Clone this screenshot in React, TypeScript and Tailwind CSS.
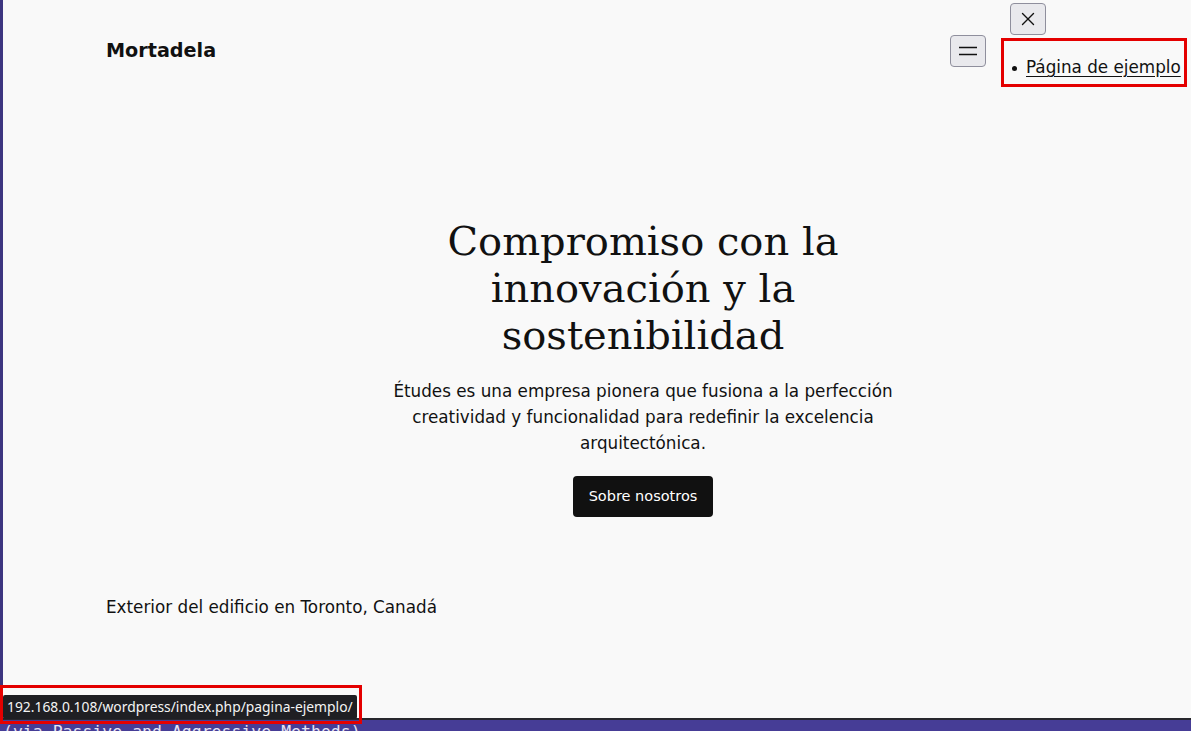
import { X } from "lucide-react";

export default function App() {
  return (
    <div className="relative h-[731px] w-[1191px] overflow-hidden bg-[#463d96]">
      <div className="flex h-[720px] border-b-2 border-l-[3px] border-b-[#27272d] border-l-[#3d3680] bg-[#f9f9f9] font-['DejaVu_Sans',sans-serif] text-[#111]">
        <div className="flex w-full flex-col">
          <header className="flex items-start pl-[103px]">
            <div className="mt-[38px] text-[19.2px] font-bold leading-[26px]">Mortadela</div>
            <button className="ml-auto mt-[35px] flex h-[32px] w-[36px] items-center justify-center rounded-[4px] border border-[#8f8f9d] bg-[#e9e9ed]">
              <svg width="18" height="10" viewBox="0 0 18 10" fill="none" stroke="#111" strokeWidth="1.5">
                <path d="M0 1.5h18M0 8.5h18" />
              </svg>
            </button>
            <div className="ml-[15px] mr-[4px] flex flex-col">
              <button className="ml-[9px] mt-[3px] flex h-[32px] w-[36px] items-center justify-center rounded-[4px] border border-[#8f8f9d] bg-[#e9e9ed]">
                <X size={22} strokeWidth={1.5} color="#111" />
              </button>
              <ul className="mt-[3px] flex h-[49px] w-[186px] items-center border-[3px] border-[#e40000] pl-[8px] text-[16.8px]">
                <li className="flex items-center gap-[9px] pt-[10px]">
                  <span className="mt-[2px] h-[5px] w-[5px] rounded-full bg-[#111]" />
                  <a className="underline underline-offset-[3px]">Página de ejemplo</a>
                </li>
              </ul>
            </div>
          </header>
          <main className="ml-[103px] mr-[11px] flex flex-col items-center pt-[131px] text-center">
            <h1 className="font-['DejaVu_Serif',serif] text-[40px] leading-[47px]">
              Compromiso con la
              <br />
              innovación y la
              <br />
              sostenibilidad
            </h1>
            <p className="mt-[19px] max-w-[520px] text-[16.8px] leading-[26px]">
              Études es una empresa pionera que fusiona a la perfección creatividad y funcionalidad para redefinir la excelencia arquitectónica.
            </p>
            <button className="mt-[20px] h-[41px] w-[140px] rounded-[4px] bg-[#111] text-[14.5px] text-white">Sobre nosotros</button>
          </main>
          <p className="ml-[103px] mt-[77px] text-[16.8px] leading-[26px]">Exterior del edificio en Toronto, Canadá</p>
        </div>
      </div>
      <div className="pl-[3px] pt-[3px] font-['DejaVu_Sans_Mono',monospace] text-[16.5px] leading-[18px] text-[#e6e3f5]">
        (via Passive and Aggressive Methods)
      </div>
      <div className="absolute left-0 top-[685px] h-[39px] w-[362px] border-[3px] border-[#e40000] pl-0 pt-[7px]">
        <div className="flex h-[24px] w-[354px] items-center rounded-[2px] bg-[#1f1f23] pl-[4px] font-['Noto_Sans',sans-serif] text-[13.85px] text-[#f4f4f4]">
          192.168.0.108/wordpress/index.php/pagina-ejemplo/
        </div>
      </div>
    </div>
  );
}
